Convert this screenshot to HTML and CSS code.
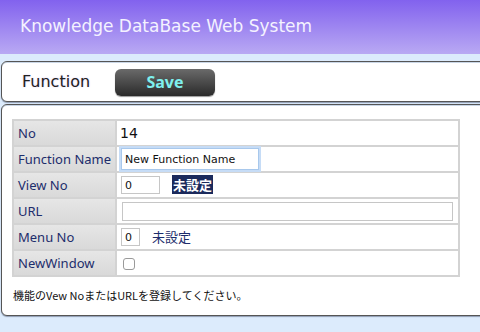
FILE: index.html
```html
<!DOCTYPE html>
<html>
<head>
<meta charset="utf-8">
<link rel="stylesheet" href="styles.css">
</head>
<body>
<header class="hdr"><h1 class="title">Knowledge DataBase Web System</h1></header>
<div class="wrap">
  <div class="bar">
    <span class="bar-title">Function</span>
    <button class="save">Save</button>
  </div>
  <div class="panel">
    <table class="form">
      <tr><th>No</th><td class="num">14</td></tr>
      <tr><th>Function Name</th><td><input class="in-name" type="text" value="New Function Name"></td></tr>
      <tr><th>View No</th><td><input class="in-no" type="text" value="0"><span class="unset sel">未設定</span></td></tr>
      <tr><th>URL</th><td><input class="in-url" type="text" value=""></td></tr>
      <tr><th>Menu No</th><td><input class="in-menu" type="text" value="0"><span class="unset">未設定</span></td></tr>
      <tr><th>NewWindow</th><td><span class="chk"></span></td></tr>
    </table>
    <p class="note">機能のVew NoまたはURLを登録してください。</p>
  </div>
</div>
</body>
</html>
```
FILE: styles.css
```css
html, body { margin: 0; padding: 0; }
body {
  background: #dcebfc;
  font-family: "DejaVu Sans", "Noto Sans CJK JP", sans-serif;
  width: 480px;
  height: 332px;
  overflow: hidden;
}
.hdr {
  height: 54px;
  background: linear-gradient(#8262ee, #b9a9f3);
  display: flex;
  align-items: center;
  padding-left: 20px;
}
.title {
  margin: 0 0 3px 0;
  font-weight: normal;
  font-size: 17px;
  color: #f4f2ff;
}
.wrap {
  padding: 7px 0 0 1px;
  display: flex;
  flex-direction: column;
  gap: 2px;
}
.bar {
  margin-right: -12px;
  height: 39px;
  background: #fff;
  border: 1px solid #555;
  border-radius: 6px;
  box-shadow: inset 0 1px 0 #c9d6e6, 0 1px 1px #8f9db3;
  display: flex;
  align-items: center;
  padding-left: 20px;
}
.bar-title {
  font-size: 16px;
  color: #222;
  text-shadow: 0 0 2px #d8c8f4;
  width: 93px;
}
.save {
  width: 100px;
  height: 27px;
  border: 0;
  border-radius: 6px;
  background: linear-gradient(#6a6a6a, #2a2a2a);
  box-shadow: 0 1px 1px #999;
  color: #7ef0ee;
  font-family: "Noto Sans", sans-serif;
  font-weight: bold;
  font-size: 16px;
  padding: 0;
  margin-top: 1px;
}
.panel {
  margin-right: -12px;
  height: 196px;
  background: #fff;
  border: 1px solid #555;
  border-radius: 6px;
  box-shadow: inset 0 1px 0 #c9d6e6, 0 1px 1px #8f9db3;
  padding: 14px 0 0 10px;
  box-sizing: content-box;
}
.form {
  width: 448px;
  border-collapse: separate;
  border-spacing: 2px;
  background: #d3d3d3;
}
.form th, .form td {
  height: 24px;
  padding: 0;
  vertical-align: middle;
  white-space: nowrap;
}
.form th {
  width: 101px;
  text-align: left;
  font-family: "Noto Sans", sans-serif;
  font-weight: normal;
  font-size: 13px;
  color: #1d2d6c;
  padding-left: 4px;
  background: linear-gradient(#e6e6e6, #d9d9d9);
  box-sizing: border-box;
}
.form td {
  background: #fff;
  padding-left: 3px;
  font-size: 13px;
}
.form td.num { font-size: 14px; color: #111; padding-left: 3px; }
input {
  font-family: "DejaVu Sans", sans-serif;
  font-size: 11px;
  border: 1px solid #c6c6c6;
  padding: 1px 3px;
  margin: 0;
  box-sizing: border-box;
  color: #111;
  vertical-align: middle;
}
.in-name {
  width: 138px;
  height: 22px;
  border: 1px solid #a8c8ec;
  box-shadow: 0 0 0 2px #c6dcf6;
  margin-left: 1px;
}
.in-no { width: 39px; height: 18px; margin-left: 1px; }
.in-url { width: 331px; height: 19px; margin-left: 2px; }
.in-menu { width: 19px; height: 18px; margin-left: 1px; }
.unset {
  font-family: "Noto Sans CJK JP", sans-serif;
  font-size: 13px;
  font-weight: bold;
  color: #1d2d6c;
  vertical-align: middle;
  line-height: 16px;
}
.in-no + .unset { margin-left: 12px; }
.in-menu + .unset { margin-left: 12px; font-weight: normal; }
.sel {
  background: #1b2a5c;
  color: #fff;
  padding: 0 1px;
}
.chk {
  display: inline-block;
  width: 12px;
  height: 12px;
  border: 1px solid #9a9a9a;
  border-radius: 3px;
  box-sizing: border-box;
  margin-left: 3px;
  vertical-align: middle;
  background: #fff;
}
.note {
  margin: 11px 0 0 1px;
  font-family: "Noto Sans CJK JP", sans-serif;
  font-size: 11px;
  color: #111;
  line-height: 14px;
}
```
